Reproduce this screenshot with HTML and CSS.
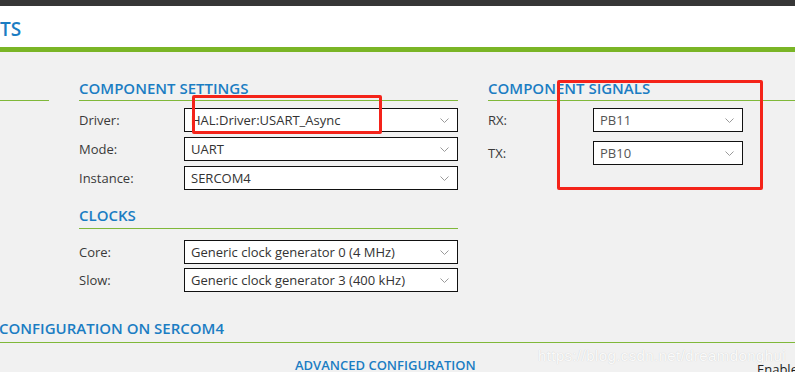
FILE: index.html
```html
<!DOCTYPE html>
<html lang="en">
<head>
<meta charset="utf-8">
<title>Components</title>
<link rel="stylesheet" href="styles.css">
</head>
<body>
<div class="topbar"></div>
<header class="header"><h1 class="title">TS</h1></header>
<main class="main">
  <div class="columns">
    <section class="col">
      <h2 class="heading">&nbsp;</h2>
    </section>
    <section class="col">
      <h2 class="heading">COMPONENT SETTINGS</h2>
      <div class="fields">
        <div class="row"><span class="label">Driver:</span><div class="select"><span>HAL:Driver:USART_Async</span><svg class="chev" width="9" height="5" viewBox="0 0 9 5"><polyline points="0.5,0.5 4.5,4.5 8.5,0.5" fill="none" stroke="#9a9a9a" stroke-width="1"/></svg></div></div>
        <div class="row"><span class="label">Mode:</span><div class="select"><span>UART</span><svg class="chev" width="9" height="5" viewBox="0 0 9 5"><polyline points="0.5,0.5 4.5,4.5 8.5,0.5" fill="none" stroke="#9a9a9a" stroke-width="1"/></svg></div></div>
        <div class="row"><span class="label">Instance:</span><div class="select"><span>SERCOM4</span><svg class="chev" width="9" height="5" viewBox="0 0 9 5"><polyline points="0.5,0.5 4.5,4.5 8.5,0.5" fill="none" stroke="#9a9a9a" stroke-width="1"/></svg></div></div>
      </div>
      <h2 class="heading heading-clocks">CLOCKS</h2>
      <div class="fields fields-clocks">
        <div class="row"><span class="label">Core:</span><div class="select"><span>Generic clock generator 0 (4 MHz)</span><svg class="chev" width="9" height="5" viewBox="0 0 9 5"><polyline points="0.5,0.5 4.5,4.5 8.5,0.5" fill="none" stroke="#9a9a9a" stroke-width="1"/></svg></div></div>
        <div class="row"><span class="label">Slow:</span><div class="select"><span>Generic clock generator 3 (400 kHz)</span><svg class="chev" width="9" height="5" viewBox="0 0 9 5"><polyline points="0.5,0.5 4.5,4.5 8.5,0.5" fill="none" stroke="#9a9a9a" stroke-width="1"/></svg></div></div>
      </div>
    </section>
    <section class="col">
      <h2 class="heading">COMPONENT SIGNALS</h2>
      <div class="fields fields-signals">
        <div class="row row-signal"><span class="label">RX:</span><div class="select select-signal"><span>PB11</span><svg class="chev" width="9" height="5" viewBox="0 0 9 5"><polyline points="0.5,0.5 4.5,4.5 8.5,0.5" fill="none" stroke="#9a9a9a" stroke-width="1"/></svg></div></div>
        <div class="row row-signal"><span class="label">TX:</span><div class="select select-signal"><span>PB10</span><svg class="chev" width="9" height="5" viewBox="0 0 9 5"><polyline points="0.5,0.5 4.5,4.5 8.5,0.5" fill="none" stroke="#9a9a9a" stroke-width="1"/></svg></div></div>
      </div>
    </section>
  </div>
  <section class="config">
    <h2 class="heading heading-config">CONFIGURATION ON SERCOM4</h2>
    <div class="config-row">
      <span class="adv">ADVANCED CONFIGURATION</span>
      <span class="enable">Enable</span>
    </div>
  </section>
</main>
<div class="mark mark-driver"></div>
<div class="mark mark-signals"></div>
<div class="watermark">https://blog.csdn.net/dreamdonghui</div>
</body>
</html>
```
FILE: styles.css
```css
html, body {
  margin: 0;
  padding: 0;
}
body {
  width: 795px;
  height: 372px;
  overflow: hidden;
  position: relative;
  background: #f1f1f1;
  font-family: "Open Sans", "DejaVu Sans", sans-serif;
  color: #333;
}
.topbar {
  height: 6px;
  background: #363636;
}
.header {
  height: 46px;
  box-sizing: border-box;
  background: #fff;
  border-bottom: 5px solid #7ab526;
  padding-top: 10px;
}
.title {
  margin: 0;
  font-size: 19px;
  line-height: 26px;
  font-weight: 600;
  color: #1b7dc3;
}
.main {
  padding-top: 26px;
}
.columns {
  display: grid;
  grid-template-columns: 49px 379px 307px;
  column-gap: 30px;
  align-items: start;
}
.heading {
  margin: 0;
  font-size: 15px;
  line-height: 20px;
  font-weight: 600;
  color: #1b7dc3;
  padding-bottom: 2px;
  border-bottom: 1px solid #80b83a;
  white-space: nowrap;
}
.heading-clocks {
  margin-top: 15px;
  padding-bottom: 3px;
}
.fields {
  margin-top: 7px;
  display: flex;
  flex-direction: column;
  gap: 5px;
}
.fields-clocks {
  margin-top: 11px;
  gap: 4px;
}
.fields-signals {
  gap: 9px;
}
.row {
  display: grid;
  grid-template-columns: 105px 274px;
  align-items: center;
}
.row-signal {
  grid-template-columns: 105px 150px;
}
.label {
  font-size: 13px;
  color: #3a3a3a;
}
.select {
  height: 24px;
  box-sizing: border-box;
  border: 1px solid #111;
  background: #fff;
  display: flex;
  align-items: center;
  justify-content: space-between;
  padding: 0 8px 0 6px;
  font-size: 13px;
  color: #333;
  white-space: nowrap;
}
.select-signal {
  color: #555;
}
.chev {
  flex: none;
}
.config {
  margin-top: 26px;
}
.heading-config {
  padding-bottom: 4px;
  margin-left: -1px;
}
.config-row {
  display: flex;
  align-items: flex-start;
  padding-left: 295px;
  margin-top: 13px;
  white-space: nowrap;
}
.adv {
  width: 462px;
  flex: none;
  font-size: 13px;
  line-height: 18px;
  font-weight: 600;
  color: #1b7dc3;
}
.enable {
  font-size: 13px;
  line-height: 18px;
  color: #222;
  margin-top: 4px;
}
.mark {
  position: absolute;
  border: 3px solid #f4231a;
  border-radius: 2px;
  box-sizing: border-box;
}
.mark-driver {
  left: 192px;
  top: 95px;
  width: 190px;
  height: 39px;
}
.mark-signals {
  left: 557px;
  top: 80px;
  width: 206px;
  height: 110px;
}
.watermark {
  position: absolute;
  left: 538px;
  top: 347px;
  font-family: "Liberation Sans", Arial, sans-serif;
  font-size: 15px;
  letter-spacing: 0.4px;
  color: rgba(255, 255, 255, 0.92);
  text-shadow: 0 0 1px rgba(0, 0, 0, 0.18);
  white-space: nowrap;
}
```
